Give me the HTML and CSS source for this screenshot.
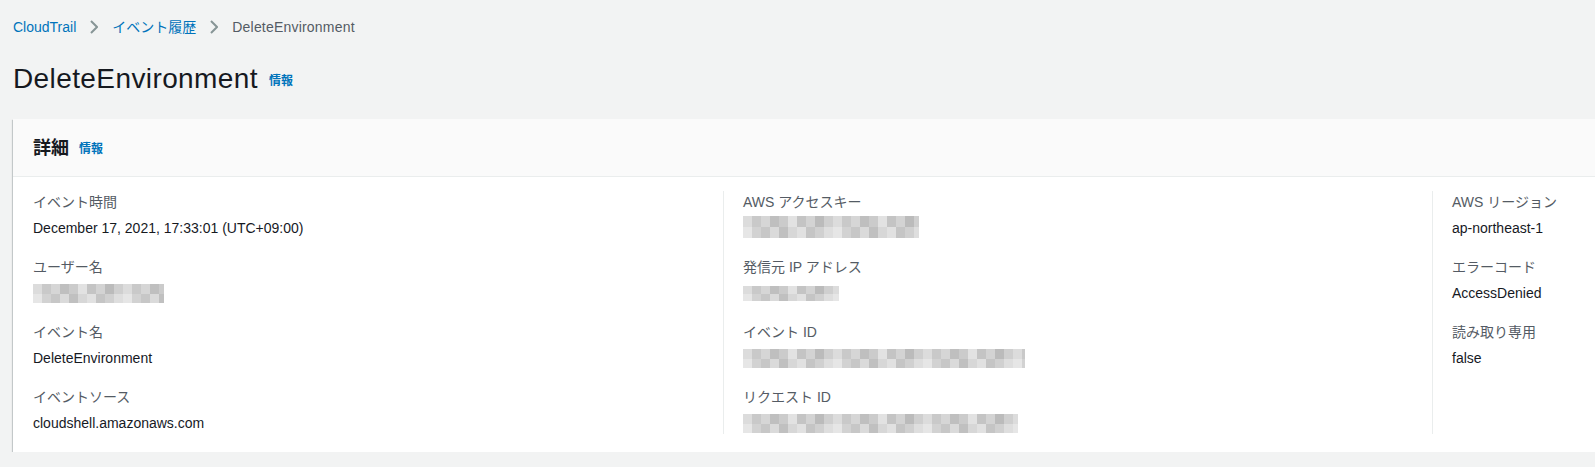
FILE: index.html
```html
<!DOCTYPE html>
<html lang="ja">
<head>
    <meta charset="UTF-8">
    <meta name="viewport" content="width=device-width, initial-scale=1.0">
    <title>DeleteEnvironment | CloudTrail</title>
    <link rel="stylesheet" href="styles.css">
</head>
<body>
    <div class="page">
        <nav class="breadcrumbs">
            <a href="#" class="crumb-link">CloudTrail</a>
            <svg class="chevron" width="8" height="14" viewBox="0 0 8 14"><polyline points="1,1 7,7 1,13" fill="none" stroke="#879596" stroke-width="2"/></svg>
            <a href="#" class="crumb-link">イベント履歴</a>
            <svg class="chevron" width="8" height="14" viewBox="0 0 8 14"><polyline points="1,1 7,7 1,13" fill="none" stroke="#879596" stroke-width="2"/></svg>
            <span class="crumb-current">DeleteEnvironment</span>
        </nav>

        <div class="title-row">
            <h1>DeleteEnvironment</h1>
            <a href="#" class="info-link">情報</a>
        </div>

        <div class="card">
            <div class="card-header">
                <h2>詳細</h2>
                <a href="#" class="info-link">情報</a>
            </div>
            <div class="card-body">
                <div class="column">
                    <div class="item">
                        <div class="label">イベント時間</div>
                        <div class="value">December 17, 2021, 17:33:01 (UTC+09:00)</div>
                    </div>
                    <div class="item">
                        <div class="label">ユーザー名</div>
                        <div class="value"><span class="blur blur-user"></span></div>
                    </div>
                    <div class="item">
                        <div class="label">イベント名</div>
                        <div class="value">DeleteEnvironment</div>
                    </div>
                    <div class="item">
                        <div class="label">イベントソース</div>
                        <div class="value">cloudshell.amazonaws.com</div>
                    </div>
                </div>
                <div class="column">
                    <div class="item">
                        <div class="label">AWS アクセスキー</div>
                        <div class="value"><span class="blur blur-key"></span></div>
                    </div>
                    <div class="item">
                        <div class="label">発信元 IP アドレス</div>
                        <div class="value"><span class="blur blur-ip"></span></div>
                    </div>
                    <div class="item">
                        <div class="label">イベント ID</div>
                        <div class="value"><span class="blur blur-event"></span></div>
                    </div>
                    <div class="item">
                        <div class="label">リクエスト ID</div>
                        <div class="value"><span class="blur blur-request"></span></div>
                    </div>
                </div>
                <div class="column">
                    <div class="item">
                        <div class="label">AWS リージョン</div>
                        <div class="value">ap-northeast-1</div>
                    </div>
                    <div class="item">
                        <div class="label">エラーコード</div>
                        <div class="value">AccessDenied</div>
                    </div>
                    <div class="item">
                        <div class="label">読み取り専用</div>
                        <div class="value">false</div>
                    </div>
                </div>
            </div>
        </div>
    </div>
</body>
</html>
```

FILE: styles.css
```css
body {
    margin: 0;
    padding: 0;
    background-color: #f2f3f3;
    font-family: "Liberation Sans", Arial, "Noto Sans CJK JP", sans-serif;
    font-size: 14px;
    color: #16191f;
    overflow: hidden;
}
a {
    text-decoration: none;
}
.page {
    padding: 17px 0 0 13px;
    width: 2300px;
}

/* breadcrumbs */
.breadcrumbs {
    display: flex;
    align-items: center;
    height: 20px;
    line-height: 20px;
}
.crumb-link {
    color: #0073bb;
}
.crumb-current {
    color: #545b64;
    letter-spacing: 0.2px;
}
.chevron {
    margin: 0 14px;
}

/* page title */
.title-row {
    display: flex;
    align-items: center;
    margin-top: 24px;
    height: 36px;
}
h1 {
    margin: 0;
    font-size: 28px;
    font-weight: normal;
    line-height: 36px;
    letter-spacing: 0.4px;
    color: #16191f;
}
.info-link {
    margin-left: 11px;
    font-size: 12px;
    font-weight: bold;
    color: #0073bb;
    line-height: 16px;
    padding-top: 3px;
}

/* details card */
.card {
    margin-top: 22px;
    width: 2200px;
    background-color: #fff;
    box-shadow: 0 1px 1px 0 rgba(0, 28, 36, 0.3), 1px 1px 1px 0 rgba(0, 28, 36, 0.15), -1px 1px 1px 0 rgba(0, 28, 36, 0.15);
}
.card-header {
    display: flex;
    align-items: center;
    padding: 18px 20px 17px;
    background-color: #fafafa;
    border-bottom: 1px solid #eaeded;
}
h2 {
    margin: 0;
    font-size: 18px;
    font-weight: bold;
    line-height: 22px;
}
.card-header .info-link {
    margin-left: 10px;
    padding-top: 1px;
}
.card-body {
    display: grid;
    grid-template-columns: 710px 709px 709px;
    padding: 14px 0 18px;
}
.column {
    display: flex;
    flex-direction: column;
    gap: 17px;
    padding-left: 20px;
}
.column + .column {
    border-left: 1px solid #eaeded;
    padding-left: 19px;
}
.label {
    color: #545b64;
    line-height: 22px;
    margin-bottom: 4px;
}
.value {
    line-height: 22px;
    height: 22px;
}

/* pixelated (hidden) values */
.blur {
    display: inline-block;
    vertical-align: top;
    height: 19px;
    margin-top: 2px;
    background-image:
        linear-gradient(90deg, #dcdcdc 0 9px, #c9c9c9 9px 18px, #d6d6d6 18px 27px, #bfbfbf 27px 36px, #cbcbcb 36px 45px, #e2e2e2 45px 54px, #c4c4c4 54px 63px, #d3d3d3 63px 72px, #bbbbbb 72px 81px, #cfcfcf 81px 90px),
        linear-gradient(90deg, #e6e6e6 0 9px, #d2d2d2 9px 18px, #c7c7c7 18px 27px, #dadada 27px 36px, #c0c0c0 36px 45px, #d7d7d7 45px 54px, #e1e1e1 54px 63px, #c5c5c5 63px 72px, #d0d0d0 72px 81px, #dedede 81px 90px);
    background-size: 90px 50%;
    background-position: 0 0, 0 100%;
    background-repeat: repeat-x;
}
.blur-user {
    width: 131px;
}
.blur-key {
    width: 176px;
    height: 22px;
    margin-top: -1px;
}
.blur-ip {
    width: 96px;
    height: 15px;
    margin-top: 4px;
}
.blur-event {
    width: 282px;
}
.blur-request {
    width: 275px;
}
```
